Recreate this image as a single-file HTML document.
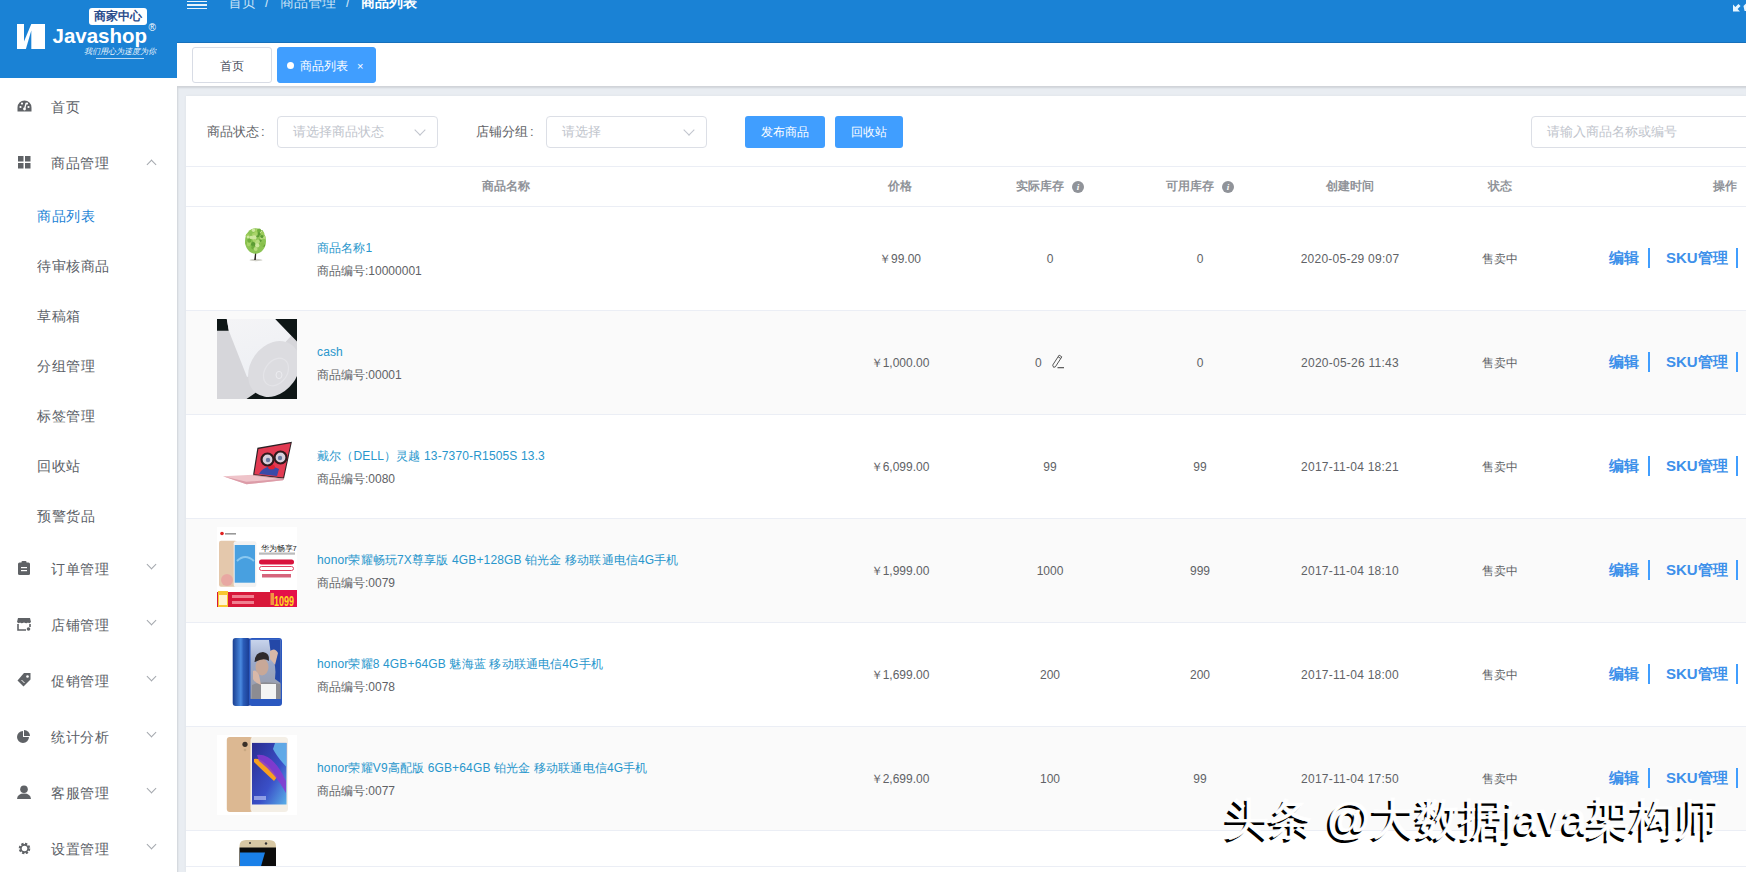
<!DOCTYPE html>
<html><head><meta charset="utf-8"><style>
*{box-sizing:border-box;margin:0;padding:0}
html,body{width:1746px;height:872px;overflow:hidden;background:#fff;font-family:"Liberation Sans",sans-serif;color:#606266}
.abs{position:absolute}
#side{position:absolute;left:0;top:0;width:177px;height:872px;background:#fff;z-index:2}
#logo{position:absolute;left:0;top:0;width:177px;height:78px;background:#1a82d5}
#hdr{position:absolute;left:177px;top:0;width:1569px;height:43px;background:#1a82d5;border-bottom:1px solid #1670bb}
#tabs{position:absolute;left:177px;top:43px;width:1569px;height:43px;background:#fff}
#bg{position:absolute;left:177px;top:86px;width:1569px;height:786px;background:#e9edf2;box-shadow:inset 1px 2px 2px rgba(0,0,0,.11)}
#card{position:absolute;left:186px;top:96px;width:1560px;box-shadow:0 0 3px rgba(0,0,0,.05);height:776px;background:#fff}
.menu{position:absolute;left:0;width:177px;height:56px;font-size:14px;color:#5a5e66}
.menu .t{position:absolute;left:51px;top:1px;line-height:56px;letter-spacing:.5px}
.menu .ic{position:absolute}
.menu .ar{position:absolute;left:148px;top:21px;width:7px;height:7px;border-right:1px solid #a4a8ae;border-bottom:1px solid #a4a8ae;transform:rotate(45deg)}
.menu .ar.up{transform:rotate(-135deg);top:26.5px}
.sub{position:absolute;left:37px;height:50px;line-height:52px;letter-spacing:.5px;font-size:14px;color:#5a5e66}
.sub.on{color:#1a82d5}
.bc{font-size:14px;line-height:16px;white-space:nowrap}
.tab{position:absolute;top:47px;height:36px;line-height:37px;font-size:12px;border:1px solid #d8dce5;border-radius:3px;text-align:center;color:#495060;white-space:nowrap}
.btn{position:absolute;top:116px;height:32px;line-height:32px;background:#409eff;color:#fff;font-size:12px;text-align:center;border-radius:3px}
.sel{position:absolute;top:116px;height:32px;border:1px solid #dcdfe6;border-radius:4px;font-size:13px;color:#c0c4cc;line-height:30px;padding-left:15px;white-space:nowrap;background:#fff}
.sel i{position:absolute;right:13px;top:9px;width:8px;height:8px;border-right:1px solid #c0c4cc;border-bottom:1px solid #c0c4cc;transform:rotate(45deg)}
.lbl{position:absolute;top:116px;line-height:32px;font-size:13px;color:#606266;white-space:nowrap}
.th{position:absolute;top:167px;height:39px;line-height:39px;font-size:12px;font-weight:bold;color:#909399;white-space:nowrap}
.info{display:inline-block;width:12px;height:12px;border-radius:50%;background:#909399;color:#fff;font-size:9px;line-height:12px;text-align:center;font-style:italic;margin-left:8px;vertical-align:0px;font-family:"Liberation Serif",serif}
.row{position:absolute;left:186px;width:1560px;height:104px;border-bottom:1px solid #ebeef5;overflow:hidden}
.row.s{background:#fafafa}
.c{position:absolute;font-size:12px;color:#606266;white-space:nowrap;line-height:14px}
.ctr span{position:absolute;left:0;transform:translateX(-50%)}
.nm{position:absolute;left:131px;font-size:12px;color:#2896cc;white-space:nowrap;line-height:14px;letter-spacing:.15px}
.cd{position:absolute;left:131px;font-size:12px;color:#606266;white-space:nowrap;line-height:14px}
.pic{position:absolute;left:31px;top:8px;width:80px;height:80px;overflow:hidden}
.op{position:absolute;font-size:15px;font-weight:bold;color:#3d90ea;white-space:nowrap;line-height:20px}
.bar{position:absolute;width:2px;height:20px;background:#409eff}
#wm{position:absolute;left:1225px;top:794px;font-size:44px;color:#fff;white-space:nowrap;z-index:5;text-shadow:-3px 3px 0 #000;-webkit-text-stroke:.6px #fff;letter-spacing:.4px;line-height:50px}

</style></head><body>
<div id="side">
<div id="logo">
 <svg class="abs" style="left:17px;top:24px" width="28" height="25" viewBox="0 0 28 25">
  <path d="M0 0 H28 V25 H0 Z" fill="#fff"/>
  <path d="M7 0 H14.3 L7 17.5 Z" fill="#1a82d5"/>
  <path d="M14.3 6.6 V25 H8.9 Z" fill="#1a82d5"/>
 </svg>
 <div class="abs" style="left:89px;top:8px;width:58px;height:17px;background:#fff;border-radius:3px;color:#2a4c8c;font-size:12px;font-weight:bold;line-height:17px;text-align:center">商家中心</div>
 <div class="abs" style="left:52.5px;top:20.5px;font-size:20.5px;font-weight:bold;color:#fff;letter-spacing:0px;line-height:30px">Javashop</div>
 <div class="abs" style="left:148.5px;top:22.5px;font-size:10px;color:#fff;line-height:10px">&#174;</div>
 <div class="abs" style="left:84px;top:46px;font-size:8px;color:#fff;line-height:11px;font-style:italic;opacity:.9">我们用心为速度为你</div>
 <div class="abs" style="left:96px;top:58px;width:48px;height:1px;background:rgba(255,255,255,.7)"></div>
</div>
<div class="menu" style="top:78px"><svg class="ic" style="left:17px;top:22px" width="15" height="12" viewBox="0 0 15 12"><path d="M7.5 0.5 A7 7 0 0 0 0.5 7.5 V11.5 H14.5 V7.5 A7 7 0 0 0 7.5 0.5Z" fill="#5f6266"/><circle cx="3.5" cy="7" r="1.1" fill="#fff"/><circle cx="5" cy="3.6" r="1.1" fill="#fff"/><circle cx="11.5" cy="7" r="1.1" fill="#fff"/><circle cx="10" cy="3.6" r="1.1" fill="#fff"/><path d="M9.2 2.8 L7.8 8" stroke="#fff" stroke-width="1.3"/><circle cx="7.5" cy="9" r="1.4" fill="#fff"/></svg><span class="t">首页</span></div>
<div class="menu" style="top:134px"><svg class="ic" width="13" height="13" viewBox="0 0 13 13" style="left:18px;top:22px"><rect x="0" y="0" width="5.5" height="5.5" fill="#5f6266"/><rect x="7" y="0" width="5.5" height="5.5" fill="#5f6266"/><rect x="0" y="7" width="5.5" height="5.5" fill="#5f6266"/><rect x="7" y="7" width="5.5" height="5.5" fill="#5f6266"/></svg><span class="t">商品管理</span><i class="ar up"></i></div>
<div class="sub on" style="top:190px">商品列表</div>
<div class="sub" style="top:240px">待审核商品</div>
<div class="sub" style="top:290px">草稿箱</div>
<div class="sub" style="top:340px">分组管理</div>
<div class="sub" style="top:390px">标签管理</div>
<div class="sub" style="top:440px">回收站</div>
<div class="sub" style="top:490px">预警货品</div>
<div class="menu" style="top:540px"><svg class="ic" width="12" height="14" viewBox="0 0 12 14" style="left:18px;top:21px"><rect x="0" y="1.5" width="12" height="12.5" rx="1.5" fill="#5f6266"/><rect x="3.5" y="0" width="5" height="3" rx="1" fill="#5f6266"/><rect x="3" y="6" width="6" height="1.2" fill="#fff"/><rect x="3" y="9" width="6" height="1.2" fill="#fff"/></svg><span class="t">订单管理</span><i class="ar "></i></div>
<div class="menu" style="top:596px"><svg class="ic" width="14" height="13" viewBox="0 0 14 13" style="left:17px;top:22px"><path d="M1 0 H13 L14 4 Q12.5 6 11 4.5 Q9.5 6 7 4.5 Q4.5 6 3 4.5 Q1.5 6 0 4 Z" fill="#5f6266"/><path d="M1 6 V12 H9 M13 6 V9" stroke="#5f6266" stroke-width="1.6" fill="none"/><circle cx="11.5" cy="11" r="1.8" fill="#5f6266"/></svg><span class="t">店铺管理</span><i class="ar "></i></div>
<div class="menu" style="top:652px"><svg class="ic" width="14" height="14" viewBox="0 0 14 14" style="left:17px;top:21px"><path d="M7 0 H13.5 V6.5 L6.5 13.5 L0.5 7.5 Z" fill="#5f6266"/><circle cx="10.5" cy="3.5" r="1.3" fill="#fff"/><path d="M4.5 7 L7.5 10" stroke="#fff" stroke-width="1"/></svg><span class="t">促销管理</span><i class="ar "></i></div>
<div class="menu" style="top:708px"><svg class="ic" width="13" height="13" viewBox="0 0 13 13" style="left:17px;top:22px"><path d="M6 1 A6 6 0 1 0 12 7 H6 Z" fill="#5f6266"/><path d="M7 0 A6 6 0 0 1 13 6 H7 Z" fill="#5f6266"/></svg><span class="t">统计分析</span><i class="ar "></i></div>
<div class="menu" style="top:764px"><svg class="ic" width="14" height="14" viewBox="0 0 14 14" style="left:17px;top:21px"><circle cx="7" cy="4.2" r="3.8" fill="#5f6266"/><path d="M0 14 Q0.5 8.5 7 8.5 Q13.5 8.5 14 14 Z" fill="#5f6266"/></svg><span class="t">客服管理</span><i class="ar "></i></div>
<div class="menu" style="top:820px"><svg class="ic" width="13" height="13" viewBox="0 0 13 13" style="left:18px;top:22px"><circle cx="6.5" cy="6.5" r="4.6" fill="none" stroke="#5f6266" stroke-width="2.4" stroke-dasharray="2.2 1.4"/><circle cx="6.5" cy="6.5" r="3.6" fill="none" stroke="#5f6266" stroke-width="1.6"/></svg><span class="t">设置管理</span><i class="ar "></i></div>
</div>
<div id="hdr">
 <div class="abs" style="left:10px;top:0.6px;width:20px;height:1.6px;background:#fff;opacity:.9"></div>
 <div class="abs" style="left:10px;top:4.2px;width:20px;height:1.6px;background:#fff;opacity:.9"></div>
 <div class="abs" style="left:10px;top:7.6px;width:20px;height:1.6px;background:#fff;opacity:.9"></div>
 <div class="abs bc" style="left:51px;top:-6px;color:#c9e2f7">首页</div>
 <div class="abs bc" style="left:88px;top:-6px;color:#c9e2f7">/</div>
 <div class="abs bc" style="left:103px;top:-6px;color:#c9e2f7">商品管理</div>
 <div class="abs bc" style="left:169px;top:-6px;color:#c9e2f7">/</div>
 <div class="abs bc" style="left:184px;top:-6px;color:#fff;font-weight:bold">商品列表</div>
 <svg class="abs" style="left:1555px;top:2px" width="14" height="11" viewBox="0 0 14 11"><path d="M1 2.5 V9.5 H8 L5.6 7.1 L8.6 4.1 L6.4 1.9 L3.4 4.9 Z" fill="#e8f6ff"/><path d="M14 1.5 L11.5 4 L12.6 9 L14 9 Z" fill="#e8f6ff"/></svg>
</div>
<div id="tabs"></div>
<div class="tab" style="left:192px;width:80px;background:#fff">首页</div>
<div class="tab" style="left:277px;width:99px;background:#409eff;border-color:#409eff;color:#fff;text-align:left;padding-left:9px"><span style="display:inline-block;width:7px;height:7px;border-radius:50%;background:#fff;vertical-align:middle;margin-right:6px;position:relative;top:-1px"></span>商品列表<span style="font-size:11px;margin-left:9px">×</span></div>
<div id="bg"></div><div id="card"></div>
<div class="lbl" style="left:207px">商品状态<span style="margin-left:2px">:</span></div>
<div class="sel" style="left:277px;width:161px">请选择商品状态<i></i></div>
<div class="lbl" style="left:476px">店铺分组<span style="margin-left:2px">:</span></div>
<div class="sel" style="left:546px;width:161px">请选择<i></i></div>
<div class="btn" style="left:745px;width:80px">发布商品</div>
<div class="btn" style="left:835px;width:68px">回收站</div>
<div class="sel" style="left:1531px;width:230px">请输入商品名称或编号</div>
<div class="abs" style="left:186px;top:166px;width:1560px;height:1px;background:#ebeef5"></div>
<div class="th" style="left:482px">商品名称</div>
<div class="th" style="left:888px">价格</div>
<div class="th" style="left:1016px">实际库存<span class="info">i</span></div>
<div class="th" style="left:1166px">可用库存<span class="info">i</span></div>
<div class="th" style="left:1326px">创建时间</div>
<div class="th" style="left:1488px">状态</div>
<div class="th" style="left:1713px">操作</div>
<div class="abs" style="left:186px;top:206px;width:1560px;height:1px;background:#ebeef5"></div>
<div class="row" style="top:207px;height:104px">
<div class="pic"><svg width="80" height="80" viewBox="0 0 80 80"><g transform="translate(0,4)">
<ellipse cx="39" cy="41" rx="6.5" ry="1.2" fill="#d0d0c8"/>
<path d="M38.5 30 L39.5 30 L38.8 41 L37.2 41 Z" fill="#2a2420"/>
<ellipse cx="38.5" cy="22" rx="10.5" ry="12.8" fill="#8cc454"/>
<circle cx="39.0" cy="30.5" r="1.6" fill="#a8d468"/><circle cx="31.4" cy="23.4" r="1.9" fill="#cfe8a0"/><circle cx="31.6" cy="23.6" r="1.4" fill="#88c04c"/><circle cx="30.0" cy="24.0" r="1.8" fill="#88c04c"/><circle cx="41.4" cy="17.8" r="1.4" fill="#a8d468"/><circle cx="37.6" cy="22.9" r="2.1" fill="#6fae3c"/><circle cx="38.9" cy="13.2" r="1.6" fill="#9ccc5a"/><circle cx="40.7" cy="16.7" r="1.9" fill="#5c9c34"/><circle cx="36.5" cy="11.2" r="1.7" fill="#cfe8a0"/><circle cx="30.2" cy="16.8" r="1.4" fill="#b8dc80"/><circle cx="41.4" cy="24.4" r="1.5" fill="#88c04c"/><circle cx="31.6" cy="25.6" r="1.6" fill="#a8d468"/><circle cx="42.1" cy="14.5" r="1.8" fill="#5c9c34"/><circle cx="30.7" cy="16.5" r="2.0" fill="#9ccc5a"/><circle cx="44.4" cy="13.0" r="2.0" fill="#6fae3c"/><circle cx="36.8" cy="15.8" r="1.9" fill="#a8d468"/><circle cx="31.2" cy="17.9" r="1.5" fill="#cfe8a0"/><circle cx="43.4" cy="21.6" r="1.3" fill="#5c9c34"/><circle cx="44.2" cy="12.9" r="1.3" fill="#cfe8a0"/><circle cx="46.7" cy="26.4" r="1.2" fill="#5c9c34"/><circle cx="39.5" cy="11.3" r="1.3" fill="#a8d468"/><circle cx="38.9" cy="15.0" r="1.9" fill="#a8d468"/><circle cx="45.4" cy="14.3" r="1.8" fill="#9ccc5a"/><circle cx="37.5" cy="25.0" r="1.9" fill="#9ccc5a"/><circle cx="47.4" cy="18.4" r="1.5" fill="#b8dc80"/><circle cx="39.6" cy="24.0" r="2.2" fill="#b8dc80"/><circle cx="36.2" cy="25.3" r="2.2" fill="#5c9c34"/><circle cx="31.9" cy="24.0" r="2.0" fill="#a8d468"/><circle cx="37.2" cy="18.7" r="2.4" fill="#cfe8a0"/><circle cx="32.3" cy="21.7" r="2.1" fill="#6fae3c"/><circle cx="44.3" cy="19.0" r="1.5" fill="#b8dc80"/><circle cx="37.5" cy="21.6" r="1.7" fill="#a8d468"/><circle cx="36.2" cy="28.5" r="1.9" fill="#6fae3c"/><circle cx="45.5" cy="25.4" r="1.8" fill="#88c04c"/><circle cx="44.9" cy="17.5" r="1.5" fill="#5c9c34"/><circle cx="40.8" cy="22.4" r="2.0" fill="#b8dc80"/><circle cx="38.5" cy="29.8" r="1.9" fill="#b8dc80"/><circle cx="40.3" cy="26.4" r="2.1" fill="#cfe8a0"/><circle cx="34.2" cy="18.4" r="1.7" fill="#cfe8a0"/><circle cx="42.1" cy="11.5" r="2.0" fill="#6fae3c"/>
</g></svg></div>
<div class="nm" style="top:34px">商品名称1</div>
<div class="cd" style="top:57px">商品编号:10000001</div>
<div class="c ctr" style="left:714px;width:1px;top:45px"><span>￥99.00</span></div>
<div class="c ctr" style="left:864px;width:1px;top:45px"><span>0</span></div>
<div class="c ctr" style="left:1014px;width:1px;top:45px"><span>0</span></div>
<div class="c ctr" style="left:1164px;width:1px;top:45px"><span style="letter-spacing:.25px">2020-05-29 09:07</span></div>
<div class="c ctr" style="left:1314px;width:1px;top:45px"><span>售卖中</span></div>
<div class="op" style="left:1423px;top:41px">编辑</div><div class="bar" style="left:1462px;top:41px"></div>
<div class="op" style="left:1480px;top:41px">SKU管理</div><div class="bar" style="left:1550px;top:41px"></div>
</div>
<div class="row s" style="top:311px;height:104px">
<div class="pic"><svg width="80" height="80" viewBox="0 0 80 80">
<defs><linearGradient id="rw" x1="0" y1="0" x2="0.3" y2="1"><stop offset="0" stop-color="#f4f4f6"/><stop offset="1" stop-color="#eef0f4"/></linearGradient></defs>
<rect width="80" height="80" fill="#0e1616"/>
<path d="M9.8 0 H58 L80 22.6 V45 L29.5 80 H0 V11.8 H11.8 Z" fill="#d6d6da"/>
<path d="M9.8 0 H58 L74 17 L40 54 L30 58 L11.8 11.8 Z" fill="url(#rw)"/>
<ellipse cx="57" cy="50" rx="23.5" ry="30" transform="rotate(36 57 50)" fill="#dcdce0"/>
<ellipse cx="59" cy="53" rx="11" ry="15" transform="rotate(36 59 53)" fill="none" stroke="#e4e4e8" stroke-width="1.2"/>
<ellipse cx="62" cy="56" rx="3" ry="3.6" fill="none" stroke="#ececf0" stroke-width="1"/>
</svg></div>
<div class="nm" style="top:34px">cash</div>
<div class="cd" style="top:57px">商品编号:00001</div>
<div class="c ctr" style="left:714px;width:1px;top:45px"><span>￥1,000.00</span></div>
<div class="c" style="left:849px;top:45px">0</div>
<svg class="abs" style="left:864px;top:43px" width="16" height="16" viewBox="0 0 16 16"><path d="M2.66 11.13 L9.16 1.13 L11.84 2.87 L5.34 12.87 Q3.2 14.6 2.66 11.13 Z" fill="none" stroke="#555" stroke-width="1"/><path d="M8.1 2.8 L10.8 4.5" stroke="#555" stroke-width="1"/><path d="M7.5 13.7 H14" stroke="#444" stroke-width="1.1"/></svg>
<div class="c ctr" style="left:1014px;width:1px;top:45px"><span>0</span></div>
<div class="c ctr" style="left:1164px;width:1px;top:45px"><span style="letter-spacing:.25px">2020-05-26 11:43</span></div>
<div class="c ctr" style="left:1314px;width:1px;top:45px"><span>售卖中</span></div>
<div class="op" style="left:1423px;top:41px">编辑</div><div class="bar" style="left:1462px;top:41px"></div>
<div class="op" style="left:1480px;top:41px">SKU管理</div><div class="bar" style="left:1550px;top:41px"></div>
</div>
<div class="row" style="top:415px;height:104px">
<div class="pic"><svg width="80" height="80" viewBox="0 0 80 80"><g transform="translate(0,4)">
<path d="M40.4 20.7 L74.9 14.8 L67 51.7 L36 48.3 Z" fill="#2a2024"/>
<path d="M41.4 22 L73.6 16.3 L66.2 50.4 L37.3 47.3 Z" fill="#e23a52"/>
<path d="M44 44 Q52 36 62 42 L60 49 L42 47Z" fill="#3a4aa8"/>
<ellipse cx="54.5" cy="40" rx="3.5" ry="2.5" fill="#e02030"/>
<circle cx="50.5" cy="32.5" r="6" fill="#d8d0dc" stroke="#30181c" stroke-width="2.2"/>
<circle cx="63.5" cy="30.5" r="6" fill="#d8d0dc" stroke="#30181c" stroke-width="2.2"/>
<circle cx="51" cy="33" r="2.2" fill="#6a7aa0"/><circle cx="63" cy="31" r="2.2" fill="#6a7aa0"/>
<path d="M6 49.3 L36 47.8 L67 51.7 L66 53.2 L29.5 57.2 Z" fill="#efc4ca"/>
<path d="M6 49.3 L29.5 54.8 L67 51.7 L66 53.2 L29.5 57.2 Z" fill="#dc9ca8"/>
<path d="M36 48.1 L67 51.9" stroke="#b07880" stroke-width=".6"/>
</g></svg></div>
<div class="nm" style="top:34px">戴尔（DELL）灵越 13-7370-R1505S 13.3</div>
<div class="cd" style="top:57px">商品编号:0080</div>
<div class="c ctr" style="left:714px;width:1px;top:45px"><span>￥6,099.00</span></div>
<div class="c ctr" style="left:864px;width:1px;top:45px"><span>99</span></div>
<div class="c ctr" style="left:1014px;width:1px;top:45px"><span>99</span></div>
<div class="c ctr" style="left:1164px;width:1px;top:45px"><span style="letter-spacing:.25px">2017-11-04 18:21</span></div>
<div class="c ctr" style="left:1314px;width:1px;top:45px"><span>售卖中</span></div>
<div class="op" style="left:1423px;top:41px">编辑</div><div class="bar" style="left:1462px;top:41px"></div>
<div class="op" style="left:1480px;top:41px">SKU管理</div><div class="bar" style="left:1550px;top:41px"></div>
</div>
<div class="row s" style="top:519px;height:104px">
<div class="pic"><svg width="80" height="80" viewBox="0 0 80 80"><g transform="translate(0,4)">
<rect y="-4" width="80" height="84" fill="#fff"/>
<circle cx="5" cy="2.5" r="1.8" fill="#e02020"/><rect x="8" y="2" width="11" height="1.6" fill="#999"/>
<rect x="2" y="9.8" width="18" height="46" rx="2" fill="#e4c8ac"/>
<circle cx="10" cy="49" r="6" fill="#e8a0a0" opacity=".8"/>
<rect x="16.7" y="10.3" width="22.7" height="45.7" rx="2" fill="#f2f2f2"/>
<rect x="17.7" y="14" width="20.3" height="37.7" fill="#48a0e0"/>
<path d="M20 30 Q28 22 37 30" stroke="#8ac8f0" stroke-width="2" fill="none"/>
<text x="43.5" y="20" font-size="7.5" fill="#222" font-family="Liberation Sans">华为畅享7</text>
<rect x="42" y="21.5" width="36" height="2.2" fill="#bbb"/>
<rect x="42" y="28.5" width="35" height="5" rx="2.5" fill="#d8123c"/>
<rect x="42.5" y="35.5" width="34" height="4" rx="2" fill="#fff" stroke="#e04060" stroke-width="1"/>
<rect x="45" y="43" width="29" height="3.5" fill="#c83050" opacity=".75"/>
<rect x="0" y="61" width="80" height="16" fill="#d8183a"/>
<rect x="53" y="59" width="27" height="18" fill="#e4104a"/>
<rect x="1" y="60" width="10" height="16" fill="#f8c830"/><rect x="2" y="64" width="8" height="10" fill="#fff4d0"/>
<rect x="15" y="64" width="22" height="3" fill="#f08090"/><rect x="15" y="70" width="22" height="3" fill="#f08090"/>
<rect x="53.5" y="62" width="3.5" height="12" fill="#f8d040" opacity=".7"/><text transform="translate(57 75) scale(.6 1)" x="0" y="0" font-size="15" font-weight="bold" fill="#ffd820" font-family="Liberation Sans">1099</text>
</g></svg></div>
<div class="nm" style="top:34px">honor荣耀畅玩7X尊享版 4GB+128GB 铂光金 移动联通电信4G手机</div>
<div class="cd" style="top:57px">商品编号:0079</div>
<div class="c ctr" style="left:714px;width:1px;top:45px"><span>￥1,999.00</span></div>
<div class="c ctr" style="left:864px;width:1px;top:45px"><span>1000</span></div>
<div class="c ctr" style="left:1014px;width:1px;top:45px"><span>999</span></div>
<div class="c ctr" style="left:1164px;width:1px;top:45px"><span style="letter-spacing:.25px">2017-11-04 18:10</span></div>
<div class="c ctr" style="left:1314px;width:1px;top:45px"><span>售卖中</span></div>
<div class="op" style="left:1423px;top:41px">编辑</div><div class="bar" style="left:1462px;top:41px"></div>
<div class="op" style="left:1480px;top:41px">SKU管理</div><div class="bar" style="left:1550px;top:41px"></div>
</div>
<div class="row" style="top:623px;height:104px">
<div class="pic"><svg width="80" height="80" viewBox="0 0 80 80">
<defs><linearGradient id="bs" x1="0" y1="0" x2="1" y2="0"><stop offset="0" stop-color="#1a3e90"/><stop offset=".45" stop-color="#4a8ae0"/><stop offset=".6" stop-color="#2a5cb8"/><stop offset="1" stop-color="#16348a"/></linearGradient>
<linearGradient id="bt" x1="0" y1="0" x2="0" y2="1"><stop offset="0" stop-color="#c8d4ec"/><stop offset=".4" stop-color="#9aa8c8"/><stop offset="1" stop-color="#9a9aa0"/></linearGradient></defs><g transform="translate(0,4)">
<rect x="15.7" y="2.9" width="18" height="68" rx="3" fill="url(#bs)"/>
<rect x="32" y="3" width="33" height="68" rx="3" fill="#2a58c0"/>
<rect x="33.5" y="4.9" width="30" height="59" fill="url(#bt)"/>
<path d="M52 5 H63.5 V48 L58 44 Q60 30 54 20Z" fill="#2448a8"/>
<path d="M35 64 V50 Q45 45 63.5 49 V64Z" fill="#8c8c92"/>
<rect x="44" y="49" width="15" height="15" fill="#f4f4f4"/>
<ellipse cx="45" cy="32" rx="6.5" ry="8.5" fill="#c8a898"/>
<path d="M37.5 27 Q38 17 46 17 Q53 18 52 26 Q47 22 38 27Z" fill="#2e2a2c"/>
<path d="M53 16 Q58 12 61 18 L58 30 Q55 26 53 24Z" fill="#d8b8a8"/>
<path d="M36 36 Q39 34 42 40 L44 50 Q38 48 36 44Z" fill="#d8b8a8"/>
</g></svg></div>
<div class="nm" style="top:34px">honor荣耀8 4GB+64GB 魅海蓝 移动联通电信4G手机</div>
<div class="cd" style="top:57px">商品编号:0078</div>
<div class="c ctr" style="left:714px;width:1px;top:45px"><span>￥1,699.00</span></div>
<div class="c ctr" style="left:864px;width:1px;top:45px"><span>200</span></div>
<div class="c ctr" style="left:1014px;width:1px;top:45px"><span>200</span></div>
<div class="c ctr" style="left:1164px;width:1px;top:45px"><span style="letter-spacing:.25px">2017-11-04 18:00</span></div>
<div class="c ctr" style="left:1314px;width:1px;top:45px"><span>售卖中</span></div>
<div class="op" style="left:1423px;top:41px">编辑</div><div class="bar" style="left:1462px;top:41px"></div>
<div class="op" style="left:1480px;top:41px">SKU管理</div><div class="bar" style="left:1550px;top:41px"></div>
</div>
<div class="row s" style="top:727px;height:104px">
<div class="pic"><svg width="80" height="80" viewBox="0 0 80 80">
<defs><linearGradient id="gs" x1="0" y1="0" x2="1" y2="1"><stop offset="0" stop-color="#2a2c90"/><stop offset=".6" stop-color="#3a50c8"/><stop offset="1" stop-color="#5ab0e8"/></linearGradient></defs><g transform="translate(0,2)">
<rect y="-4" width="80" height="84" fill="#fff"/>
<rect x="9.8" y="0" width="26" height="75" rx="3" fill="#dcb892"/>
<circle cx="28" cy="7.3" r="2.6" fill="#3a3028"/><circle cx="28" cy="13" r="1.3" fill="#c8a882"/>
<rect x="33.5" y="0" width="37.5" height="75" rx="3.5" fill="#f4efe6"/>
<rect x="35" y="5.9" width="34.5" height="61.6" fill="url(#gs)"/>
<path d="M58 6 H69.5 V30 Q60 20 56 12Z" fill="#6ac0f0" opacity=".8"/>
<path d="M37 22 Q46 20 60 40 L57 44 Q44 32 37 25Z" fill="#f8a020"/>
<path d="M40 18 Q56 16 69 44 V56 Q58 36 42 24Z" fill="#8a38d0" opacity=".85"/>
<rect x="37" y="59" width="12" height="4" fill="#c8d0f8" opacity=".6"/>
</g></svg></div>
<div class="nm" style="top:34px">honor荣耀V9高配版 6GB+64GB 铂光金 移动联通电信4G手机</div>
<div class="cd" style="top:57px">商品编号:0077</div>
<div class="c ctr" style="left:714px;width:1px;top:45px"><span>￥2,699.00</span></div>
<div class="c ctr" style="left:864px;width:1px;top:45px"><span>100</span></div>
<div class="c ctr" style="left:1014px;width:1px;top:45px"><span>99</span></div>
<div class="c ctr" style="left:1164px;width:1px;top:45px"><span style="letter-spacing:.25px">2017-11-04 17:50</span></div>
<div class="c ctr" style="left:1314px;width:1px;top:45px"><span>售卖中</span></div>
<div class="op" style="left:1423px;top:41px">编辑</div><div class="bar" style="left:1462px;top:41px"></div>
<div class="op" style="left:1480px;top:41px">SKU管理</div><div class="bar" style="left:1550px;top:41px"></div>
</div>
<div class="row" style="top:831px;height:36px"><svg class="abs" style="left:52.5px;top:9px" width="38" height="28" viewBox="0 0 38 28">
<path d="M0.5 28 V6 Q0.5 0 7 0 H30 Q37 0 37 6 V28Z" fill="#d8c8a4"/>
<circle cx="11" cy="3" r="1" fill="#333"/><circle cx="27" cy="3.5" r="1.2" fill="#333"/>
<rect x="0.5" y="7.5" width="36.5" height="20.5" fill="#0c0c0c"/>
<path d="M1 12.5 H26 L21.5 28 H1Z" fill="#1a80e8"/>
</svg></div>
<div class="abs" style="left:186px;top:867px;width:1560px;height:5px;background:#fff"></div>
<div id="wm">头条 @大数据java架构师</div>
</body></html>
